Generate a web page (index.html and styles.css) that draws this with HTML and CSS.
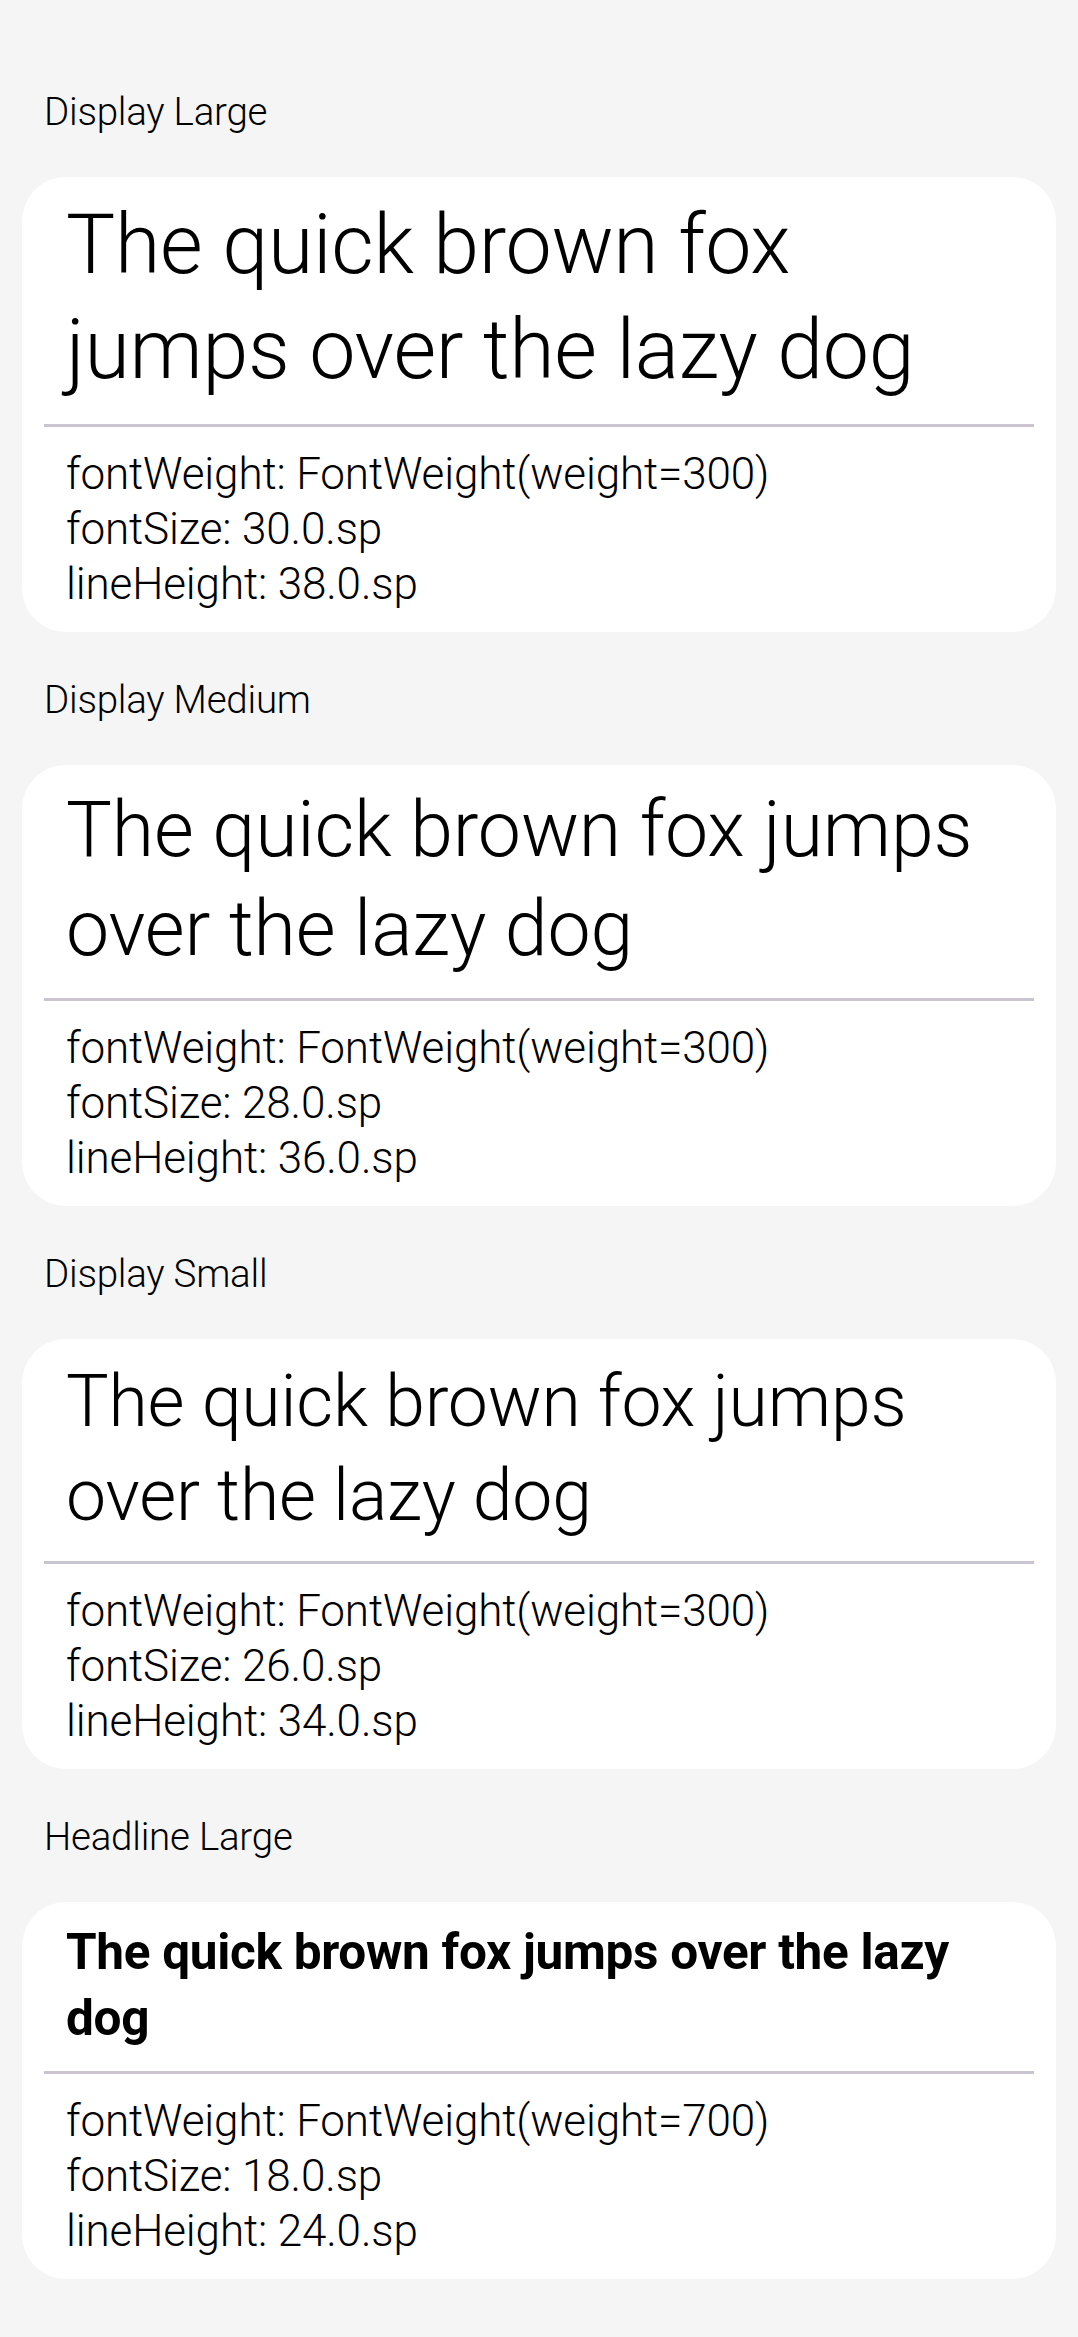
FILE: index.html
```html
<!DOCTYPE html>
<html lang="en">
<head>
<meta charset="utf-8">
<title>Typography</title>
<link rel="stylesheet" href="styles.css">
</head>
<body>
<main class="screen">
  <section class="group">
    <h2 class="group-label">Display Large</h2>
    <div class="card">
      <p class="sample sample-dl">The quick brown fox jumps over the lazy dog</p>
      <div class="divider"></div>
      <div class="meta">
        <div>fontWeight: FontWeight(weight=300)</div>
        <div>fontSize: 30.0.sp</div>
        <div>lineHeight: 38.0.sp</div>
      </div>
    </div>
  </section>
  <section class="group">
    <h2 class="group-label">Display Medium</h2>
    <div class="card">
      <p class="sample sample-dm">The quick brown fox jumps over the lazy dog</p>
      <div class="divider"></div>
      <div class="meta">
        <div>fontWeight: FontWeight(weight=300)</div>
        <div>fontSize: 28.0.sp</div>
        <div>lineHeight: 36.0.sp</div>
      </div>
    </div>
  </section>
  <section class="group">
    <h2 class="group-label">Display Small</h2>
    <div class="card">
      <p class="sample sample-ds">The quick brown fox jumps over the lazy dog</p>
      <div class="divider"></div>
      <div class="meta">
        <div>fontWeight: FontWeight(weight=300)</div>
        <div>fontSize: 26.0.sp</div>
        <div>lineHeight: 34.0.sp</div>
      </div>
    </div>
  </section>
  <section class="group">
    <h2 class="group-label">Headline Large</h2>
    <div class="card">
      <p class="sample sample-hl">The quick brown fox jumps over the lazy dog</p>
      <div class="divider"></div>
      <div class="meta">
        <div>fontWeight: FontWeight(weight=700)</div>
        <div>fontSize: 18.0.sp</div>
        <div>lineHeight: 24.0.sp</div>
      </div>
    </div>
  </section>
</main>
</body>
</html>
```
FILE: styles.css
```css
html, body {
  margin: 0;
  padding: 0;
  background: #f5f5f5;
}

body {
  font-family: Roboto, "Noto Sans", "Liberation Sans", sans-serif;
  color: #000;
}

.screen {
  display: flex;
  flex-direction: column;
  padding: 44px 22px 0;
}

.group {
  display: flex;
  flex-direction: column;
}

.group-label {
  margin: 40px 0 38px;
  padding-left: 22px;
  font-size: 38.5px;
  line-height: 55px;
  font-weight: 300;
  letter-spacing: -0.23px;
}

.card {
  background: #ffffff;
  border-radius: 44px;
  padding: 16px 22px 20px;
}

.sample {
  margin: 0;
  padding: 0 22px 22px;
  font-weight: 300;
}

.sample-dl {
  font-size: 82.5px;
  line-height: 104.5px;
  letter-spacing: -0.3px;
}

.sample-dm {
  font-size: 77px;
  line-height: 99px;
  letter-spacing: -0.14px;
  padding-bottom: 19px;
}

.sample-ds {
  font-size: 71.5px;
  line-height: 93.5px;
  letter-spacing: -0.18px;
  padding-bottom: 19px;
}

.sample-hl {
  font-size: 49.5px;
  line-height: 66px;
  font-weight: 700;
  letter-spacing: -0.3px;
  padding-top: 1px;
  padding-bottom: 20px;
}

.divider {
  height: 3px;
  background: #cac4d0;
}

.meta {
  padding: 20px 22px 0;
  font-size: 44px;
  line-height: 55px;
  font-weight: 300;
  letter-spacing: -0.13px;
}
```
